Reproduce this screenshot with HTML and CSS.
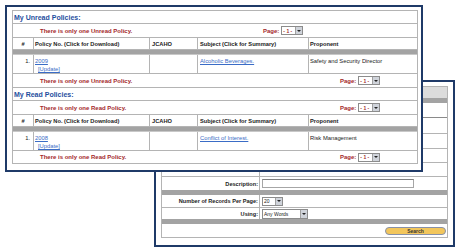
FILE: index.html
```html
<!DOCTYPE html>
<html lang="en">
<head>
    <meta charset="UTF-8">
    <meta name="viewport" content="width=device-width, initial-scale=1.0">
    <title>Policies</title>
    <link rel="stylesheet" href="styles.css">
</head>
<body>
    <div class="window window-back">
        <div class="grid">
            <div class="row bar-light"></div>
            <div class="row bar-dark"></div>
            <div class="row h14 line-dark"><div class="label"></div><div class="value"></div></div>
            <div class="row h15"><div class="label"></div><div class="value"></div></div>
            <div class="row h14"><div class="label"></div><div class="value"></div></div>
            <div class="row h13"><div class="label"></div><div class="value"></div></div>
            <div class="row h13"><div class="label"></div><div class="value"></div></div>
            <div class="row h13 no-line">
                <div class="label">Description:</div>
                <div class="value"><span class="text-input"></span></div>
            </div>
            <div class="row bar-dark"></div>
            <div class="row h12">
                <div class="label">Number of Records Per Page:</div>
                <div class="value">
                    <span class="select select-small"><span class="select-value">20</span><span class="select-arrow"><i></i></span></span>
                </div>
            </div>
            <div class="row h11 no-line">
                <div class="label">Using:</div>
                <div class="value">
                    <span class="select select-wide"><span class="select-value">Any Words</span><span class="select-arrow"><i></i></span></span>
                </div>
            </div>
            <div class="row bar-dark"></div>
            <div class="row h13 actions"><button class="btn-search">Search</button></div>
        </div>
    </div>

    <div class="window window-front">
        <div class="grid">
            <div class="row title">My Unread Policies:</div>
            <div class="row msg">
                <span class="msg-text">There is only one Unread Policy.</span>
                <span class="pager pager-mid">Page: <span class="select select-page"><span class="select-value">- 1 -</span><span class="select-arrow"><i></i></span></span></span>
            </div>
            <div class="row head">
                <div class="c1">#</div>
                <div class="c2">Policy No. (Click for Download)</div>
                <div class="c3">JCAHO</div>
                <div class="c4">Subject (Click for Summary)</div>
                <div class="c5">Proponent</div>
            </div>
            <div class="row gray"></div>
            <div class="row data">
                <div class="c1 num">1.</div>
                <div class="c2"><a href="#">2009</a><a class="update" href="#">[Update]</a></div>
                <div class="c3"></div>
                <div class="c4"><a href="#">Alcoholic Beverages.</a></div>
                <div class="c5">Safety and Security Director</div>
            </div>
            <div class="row msg">
                <span class="msg-text">There is only one Unread Policy.</span>
                <span class="pager">Page: <span class="select select-page"><span class="select-value">- 1 -</span><span class="select-arrow"><i></i></span></span></span>
            </div>

            <div class="row title">My Read Policies:</div>
            <div class="row msg">
                <span class="msg-text">There is only one Read Policy.</span>
                <span class="pager">Page: <span class="select select-page"><span class="select-value">- 1 -</span><span class="select-arrow"><i></i></span></span></span>
            </div>
            <div class="row head">
                <div class="c1">#</div>
                <div class="c2">Policy No. (Click for Download)</div>
                <div class="c3">JCAHO</div>
                <div class="c4">Subject (Click for Summary)</div>
                <div class="c5">Proponent</div>
            </div>
            <div class="row gray"></div>
            <div class="row data">
                <div class="c1 num">1.</div>
                <div class="c2"><a href="#">2008</a><a class="update" href="#">[Update]</a></div>
                <div class="c3"></div>
                <div class="c4"><a href="#">Conflict of Interest.</a></div>
                <div class="c5">Risk Management</div>
            </div>
            <div class="row msg msg-last">
                <span class="msg-text">There is only one Read Policy.</span>
                <span class="pager">Page: <span class="select select-page"><span class="select-value">- 1 -</span><span class="select-arrow"><i></i></span></span></span>
            </div>
        </div>
    </div>
</body>
</html>
```

FILE: styles.css
```css
* {
    box-sizing: border-box;
}
body {
    margin: 0;
    width: 460px;
    height: 249px;
    position: relative;
    overflow: hidden;
    background-color: #fff;
    font-family: "Liberation Sans", Arial, sans-serif;
    color: #222;
}

/* the two screenshots lying on the page */
.window {
    position: absolute;
    background-color: #fff;
    border: 2px solid #1f3a68;
}
.window-front {
    left: 5px;
    top: 5px;
    width: 418px;
    height: 167px;
    padding: 3px 3px 0 5px;
    z-index: 2;
}
.window-back {
    left: 154px;
    top: 80px;
    width: 301px;
    height: 167px;
    padding: 4px 5px 0 5px;
}

.grid {
    border: 1px solid #b4b4b4;
}
.row {
    display: flex;
    border-bottom: 1px solid #b4b4b4;
}
.row:last-child,
.no-line {
    border-bottom: none;
}

/* front: policy lists */
.title {
    height: 13px;
    align-items: center;
    padding-left: 1px;
    font-size: 7px;
    font-weight: bold;
    color: #1f4f9e;
}
.msg {
    height: 14px;
    align-items: center;
    padding-left: 27px;
    font-size: 6px;
    font-weight: bold;
    color: #a3282b;
}
.msg-last {
    height: 12px;
}
.msg-text {
    width: 300px;
}
.pager {
    display: flex;
    align-items: center;
    gap: 2px;
}
.pager-mid {
    margin-left: -77px;
}
.head {
    height: 12px;
    font-size: 5.7px;
    font-weight: bold;
}
.head > div {
    display: flex;
    align-items: center;
}
.gray {
    height: 5px;
    background-color: #a3a3a3;
    border-bottom-color: #c8c8c8;
}
.data {
    height: 19px;
    font-size: 5.8px;
}
.data > div {
    padding-top: 3px;
}
.c1 {
    width: 20px;
    justify-content: center;
}
.c2 {
    width: 116px;
    padding-left: 1px;
}
.c3 {
    width: 48px;
    padding-left: 2px;
}
.c4 {
    width: 111px;
    padding-left: 2px;
}
.c5 {
    flex: 1;
    padding-left: 1px;
}
.c2, .c3, .c4, .c5 {
    border-left: 1px solid #b4b4b4;
}
.num {
    text-align: right;
    padding-right: 3px;
}
a {
    color: #3a6cc6;
}
.update {
    display: block;
    margin: 2px 0 0 3px;
}

/* selects, inputs, button */
.select {
    display: inline-flex;
    height: 9px;
    border: 1px solid #8c8c8c;
    background-color: #fff;
}
.select-value {
    flex: 1;
    display: flex;
    align-items: center;
    padding-left: 1px;
    font-size: 5px;
}
.select-arrow {
    width: 7px;
    display: flex;
    align-items: center;
    justify-content: center;
    background-color: #cfd3da;
    border-left: 1px solid #a0a0a0;
}
.select-arrow i {
    border-left: 2px solid transparent;
    border-right: 2px solid transparent;
    border-top: 2px solid #222;
}
.select-page {
    width: 22px;
}
.select-page .select-value {
    color: #a3282b;
    font-weight: bold;
}
.select-small {
    width: 21px;
}
.select-wide {
    width: 46px;
    height: 10px;
}
.text-input {
    display: block;
    width: 152px;
    height: 9px;
    border: 1px solid #a6a6a6;
    border-top-color: #808080;
}

/* back: search form */
.bar-light {
    height: 11px;
    background-color: #dcdcdc;
    border-bottom: none;
}
.bar-dark {
    height: 5px;
    background-color: #a3a3a3;
    border-bottom: none;
}
.line-dark {
    border-bottom-color: #8a8a8a;
}
.h11 { height: 11px; }
.h12 { height: 13px; }
.h13 { height: 14px; }
.h14 { height: 15px; }
.h15 { height: 16px; }
.h13.no-line { height: 13px; }
.h11.no-line { height: 11px; }
.label {
    width: 97px;
    display: flex;
    align-items: center;
    justify-content: flex-end;
    padding-right: 1px;
    font-size: 5.6px;
    font-weight: bold;
}
.value {
    flex: 1;
    display: flex;
    align-items: center;
    padding-left: 2px;
    border-left: 1px solid #b4b4b4;
}
.actions {
    height: 13px;
    justify-content: flex-end;
    align-items: center;
    padding-right: 1px;
}
.btn-search {
    width: 61px;
    height: 8px;
    padding: 0;
    border: 1px solid #8790a8;
    border-radius: 4px;
    background-color: #f2c65c;
    font-family: inherit;
    font-size: 5px;
    font-weight: bold;
    line-height: 6px;
    color: #333;
}
```
